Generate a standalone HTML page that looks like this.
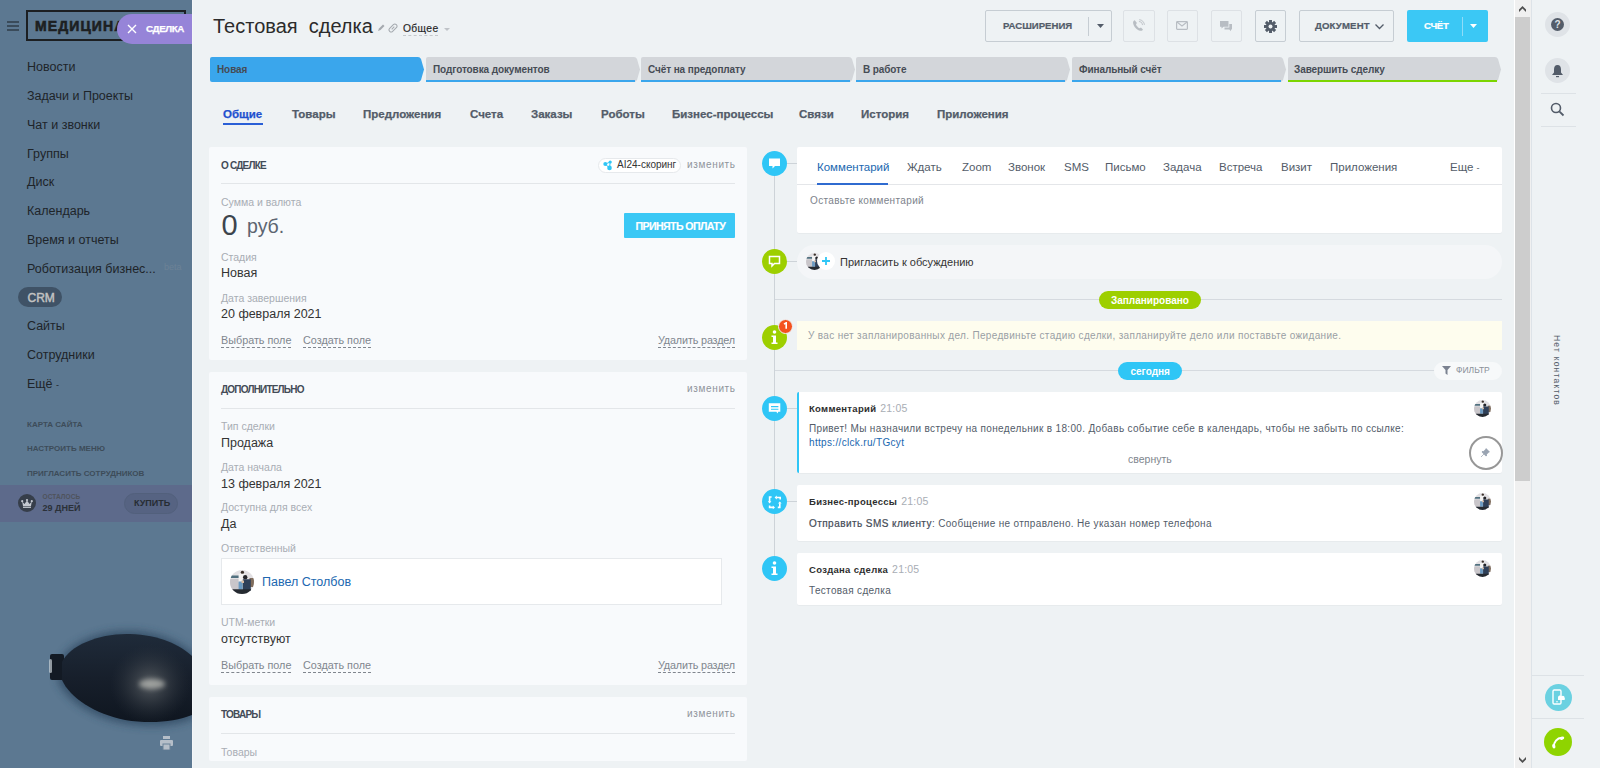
<!DOCTYPE html>
<html><head><meta charset="utf-8">
<style>
*{box-sizing:border-box;margin:0;padding:0}
html,body{width:1600px;height:768px;overflow:hidden}
body{font-family:"Liberation Sans",sans-serif;background:#eef2f4;position:relative;color:#333}
.a{position:absolute;white-space:nowrap}
/* sidebar */
#sb{position:absolute;left:0;top:0;width:192px;height:768px;background:#5c7891;overflow:hidden}
#sb .mi{position:absolute;left:27px;font-size:12.5px;color:#1e2429;line-height:15px;white-space:nowrap}
#sb .sm{position:absolute;left:27px;font-size:8px;font-weight:bold;color:#3d4c59;line-height:10px;white-space:nowrap;margin-top:1px}
/* header */
.btn{position:absolute;border:1px solid #c6cdd3;border-radius:2px}
.bt{position:absolute;font-size:9.6px;font-weight:bold;color:#535c69;line-height:12px;white-space:nowrap;-webkit-text-stroke:0.2px #535c69;margin-top:0.3px}
.stxt{position:absolute;top:64px;font-size:10px;font-weight:bold;color:#464c55;letter-spacing:-0.1px;line-height:12px;white-space:nowrap}
.tab{position:absolute;top:107px;font-size:11.5px;font-weight:bold;color:#535c69;line-height:14px;white-space:nowrap;-webkit-text-stroke:0.25px #535c69}
.card{position:absolute;left:209px;width:538px;background:#f8fafc;border-radius:2px}
.ctitle{position:absolute;left:221px;margin-top:1px;font-size:10px;font-weight:bold;color:#434b57;letter-spacing:-0.8px;line-height:12px;white-space:nowrap}
.chg{position:absolute;left:687px;font-size:10px;color:#8f949b;letter-spacing:0.65px;margin-top:0px;line-height:12px;white-space:nowrap}
.hr{position:absolute;left:221px;width:514px;height:1px;background:#e3e6e9}
.lbl{position:absolute;left:221px;font-size:10.5px;color:#a8adb4;line-height:12px;white-space:nowrap}
.val{position:absolute;left:221px;font-size:12.5px;color:#333;line-height:14px;margin-top:1px;white-space:nowrap}
.dl{position:absolute;font-size:10.8px;margin-top:1px;color:#80868e;line-height:13px;white-space:nowrap;border-bottom:1px dashed #80868e}
.tl{position:absolute;left:797px;width:705px;background:#fff;border-radius:2px;box-shadow:0 1px 1px rgba(0,0,0,0.03)}
.ic{position:absolute;left:762px;width:25px;height:25px;border-radius:50%;background:#2fc6f6}
.conn{position:absolute;left:787px;width:10px;height:1px;background:#cdd3d8}
.et{position:absolute;top:160px;font-size:11.5px;color:#535c69;line-height:14px;white-space:nowrap}
.av{position:absolute;width:17px;height:17px}
.ttl{position:absolute;left:809px;font-size:9.5px;font-weight:bold;color:#2e2e2e;letter-spacing:0.3px;margin-top:-0.5px;line-height:12px;white-space:nowrap}
.ttl span{font-weight:normal;color:#a8adb4;margin-left:4px;font-size:10.5px;letter-spacing:0.2px}
.txt{position:absolute;left:809px;font-size:10px;letter-spacing:0.33px;margin-top:-0.5px;color:#535c69;line-height:13px;white-space:nowrap}
.rp{position:absolute;left:1545px;width:25px;height:25px;border-radius:50%;background:#dfe3e7}
.rsep{position:absolute;left:1541px;width:35px;height:1px;background:#dde2e6}
</style></head><body>

<svg width="0" height="0" style="position:absolute"><defs>
<clipPath id="avc"><circle cx="12" cy="12" r="12"/></clipPath>
<symbol id="ava" viewBox="0 0 24 24"><g clip-path="url(#avc)">
<rect width="24" height="24" fill="#e2e0e3"/>
<rect x="0" y="9" width="10" height="15" fill="#c9c6ca"/>
<path d="M0 5.5H9V8H0Z" fill="#51707f"/>
<rect x="19.5" y="8" width="4.5" height="9" fill="#7f6c5c"/>
<circle cx="12.4" cy="2.4" r="1.7" fill="#3a302a"/>
<path d="M8.6 3.8H15V12.5H8.6Z" fill="#f4f3f3"/>
<path d="M8.6 11.5H12.6V19.5H8.6Z" fill="#6b9ac2"/>
<circle cx="15.2" cy="7.2" r="2.2" fill="#24252a"/>
<path d="M12.8 9.3H20.8V21H12.8Z" fill="#2f4059"/>
<path d="M2 19.3H21V24H2Z" fill="#252a31"/>
<rect x="11.5" y="10.5" width="2.5" height="2.5" fill="#d9bca4"/>
</g></symbol></defs></svg>
<div id="sb">
  <!-- bulb image -->
  <svg class="a" style="left:0;top:576px" width="192" height="192" viewBox="0 576 192 192">
    <defs>
      <linearGradient id="bg1" x1="0" y1="634" x2="0" y2="722" gradientUnits="userSpaceOnUse">
        <stop offset="0" stop-color="#1f2b3a"/>
        <stop offset="0.5" stop-color="#171f2b"/>
        <stop offset="1" stop-color="#0f1620"/>
      </linearGradient>
      <radialGradient id="bg2" cx="150" cy="684" r="40" gradientUnits="userSpaceOnUse">
        <stop offset="0" stop-color="#5d6266" stop-opacity="0.9"/>
        <stop offset="1" stop-color="#2a323c" stop-opacity="0"/>
      </radialGradient>
      <filter id="blr" x="-30%" y="-50%" width="160%" height="200%"><feGaussianBlur stdDeviation="4"/></filter>
      <filter id="blr2" x="-50%" y="-100%" width="200%" height="300%"><feGaussianBlur stdDeviation="2.5"/></filter>
    </defs>
    <path d="M60 662C68 643 100 630 130 631C162 632 182 644 194 654L194 718C176 726 150 728 123 723C92 717 66 700 58 681Z" fill="#253f59" opacity="0.7" filter="url(#blr)"/>
    <rect x="50" y="654" width="14" height="26" rx="2" fill="#131a24"/>
    <rect x="49" y="659" width="3" height="14" rx="1.5" fill="#c8d0d6" opacity="0.7"/>
    <path d="M62 662C70 645 100 633 130 634C160 635 180 645 192 656L192 715C175 722 150 724 125 720C95 714 70 698 62 680Z" fill="url(#bg1)"/>
    <path d="M62 662C70 645 100 633 130 634C160 635 180 645 192 656L192 715C175 722 150 724 125 720C95 714 70 698 62 680Z" fill="url(#bg2)"/>
    <ellipse cx="152" cy="684" rx="13" ry="5" fill="#b0b2ae" opacity="0.8" filter="url(#blr2)"/>
  </svg>
  <!-- hamburger -->
  <div class="a" style="left:7px;top:21px;width:12px;height:2px;background:#3a4b5a"></div>
  <div class="a" style="left:7px;top:25px;width:12px;height:2px;background:#3a4b5a"></div>
  <div class="a" style="left:7px;top:29px;width:12px;height:2px;background:#3a4b5a"></div>
  <div class="a" style="left:26px;top:10px;width:160px;height:31px;border:2px solid #1c1f22"></div>
  <div class="a" style="left:35px;top:18px;font-size:14px;font-weight:bold;color:#1c1f22;line-height:16px;letter-spacing:1.1px;-webkit-text-stroke:0.6px #1c1f22">МЕДИЦИНА</div>
  <div class="a" style="left:117px;top:14px;width:80px;height:30px;border-radius:15px 0 0 15px;background:#9684d8"></div>
  <svg class="a" style="left:127px;top:24px" width="10" height="10" viewBox="0 0 10 10"><path d="M1 1L9 9M9 1L1 9" stroke="#fff" stroke-width="1.4"/></svg>
  <div class="a" style="left:146px;top:22.5px;font-size:9.8px;font-weight:bold;color:#fff;letter-spacing:-0.4px;line-height:12px;-webkit-text-stroke:0.25px #fff">СДЕЛКА</div>

  <div class="mi" style="top:60px">Новости</div>
  <div class="mi" style="top:89px">Задачи и Проекты</div>
  <div class="mi" style="top:118px">Чат и звонки</div>
  <div class="mi" style="top:147px">Группы</div>
  <div class="mi" style="top:175px">Диск</div>
  <div class="mi" style="top:204px">Календарь</div>
  <div class="mi" style="top:233px">Время и отчеты</div>
  <div class="mi" style="top:262px">Роботизация бизнес...</div>
  <div class="a" style="left:164px;top:262px;font-size:9px;color:#6c8296">beta</div>
  <div class="a" style="left:18px;top:287px;width:44px;height:20px;border-radius:10px;background:#3f5266"></div>
  <div class="mi" style="top:290.5px;left:27.5px;color:#c2c2c2;font-size:12px;-webkit-text-stroke:0.45px #c2c2c2">CRM</div>
  <div class="mi" style="top:319px">Сайты</div>
  <div class="mi" style="top:348px">Сотрудники</div>
  <div class="mi" style="top:377px">Ещё <span style="font-size:9px">-</span></div>
  <div class="sm" style="top:419px">КАРТА САЙТА</div>
  <div class="sm" style="top:443px">НАСТРОИТЬ МЕНЮ</div>
  <div class="sm" style="top:468px">ПРИГЛАСИТЬ СОТРУДНИКОВ</div>
  <div class="a" style="left:0;top:485px;width:192px;height:37px;background:#5d6a8b"></div>
  <div class="a" style="left:18px;top:494px;width:18px;height:18px;border-radius:50%;background:#363e4a"></div>
  <svg class="a" style="left:21px;top:498.5px" width="12" height="9" viewBox="0 0 12 9"><circle cx="1.2" cy="2.2" r="1.1" fill="#c3c8d0"/><circle cx="6" cy="1.1" r="1.1" fill="#c3c8d0"/><circle cx="10.8" cy="2.2" r="1.1" fill="#c3c8d0"/><path d="M1.2 2.5L3.5 5L6 1.5L8.5 5L10.8 2.5L10 7H2Z" fill="#c3c8d0"/><rect x="2" y="7.6" width="8" height="1.3" fill="#c3c8d0"/></svg>
  <div class="a" style="left:42.5px;top:493px;font-size:6.5px;font-weight:bold;color:#4f535b;letter-spacing:0.1px;line-height:8px">ОСТАЛОСЬ</div>
  <div class="a" style="left:42.5px;top:503px;font-size:9px;font-weight:bold;color:#2b3139;line-height:10px">29 ДНЕЙ</div>
  <div class="a" style="left:124px;top:493px;width:54px;height:21px;border-radius:11px;background:#566382;border:1px solid #52607c"></div>
  <div class="a" style="left:134px;top:498px;font-size:9px;font-weight:bold;color:#262c33;line-height:10px">КУПИТЬ</div>
  <svg class="a" style="left:160px;top:736px" width="13" height="14" viewBox="0 0 13 14"><rect x="3" y="0" width="7" height="3" fill="#b5bec8"/><rect x="0" y="4" width="13" height="6" rx="1" fill="#b5bec8"/><rect x="3" y="8" width="7" height="6" fill="#b5bec8" stroke="#6b8197" stroke-width="1"/></svg>
</div>
<div class="a" style="left:192px;top:0;width:1px;height:768px;background:#f4f6f8"></div>

<!-- title -->
<div class="a" style="left:213px;top:14px;font-size:20px;color:#2b2b2b;line-height:24px">Тестовая&nbsp; сделка</div>
<svg class="a" style="left:377px;top:24px" width="8" height="8" viewBox="0 0 8 8"><path d="M1 7L2 4.5L6 0.5L7.5 2L3.5 6Z" fill="#a4a9ae"/></svg>
<svg class="a" style="left:388px;top:23px" width="10" height="10" viewBox="0 0 10 10"><g transform="rotate(-45 5 5)"><rect x="0.3" y="2.9" width="9.4" height="4.2" rx="2.1" stroke="#a4a9ae" stroke-width="1" fill="none"/><path d="M3.2 5H6.8" stroke="#a4a9ae" stroke-width="1"/></g></svg>
<div class="a" style="left:403px;top:23px;font-size:10.3px;color:#262626;line-height:12px;letter-spacing:0.35px;-webkit-text-stroke:0.15px #262626;border-bottom:1px dashed #c4c8cc;padding-bottom:0">Общее</div>
<svg class="a" style="left:444px;top:28px" width="6" height="3" viewBox="0 0 6 3"><path d="M0 0H6L3 3Z" fill="#bfc3c8"/></svg>

<!-- buttons -->
<div class="btn" style="left:985px;top:10px;width:127px;height:32px;border-color:#c6cdd3"></div>
<div class="bt" style="left:1003px;top:20px;letter-spacing:0px">РАСШИРЕНИЯ</div>
<div class="a" style="left:1088px;top:17px;width:1px;height:19px;background:#c6cdd3"></div>
<svg class="a" style="left:1097px;top:24px" width="7" height="4" viewBox="0 0 7 4"><path d="M0 0H7L3.5 4Z" fill="#535c69"/></svg>

<div class="btn" style="left:1123px;top:10px;width:32px;height:32px;border-color:#dde1e5"></div>
<svg class="a" style="left:1132px;top:19px" width="13" height="13" viewBox="0 0 15 15"><path d="M3.2 1.5C2 1.8 1 3 1.3 4.8C2 8.5 5.5 12.8 9.6 13.6C11.2 13.9 12.3 13 12.6 12L10.3 9.8L8.8 10.8C7 10 5 7.7 4.6 6L5.7 4.6Z" fill="#b8bdc3"/><path d="M8 2.8a4.2 4.2 0 0 1 4.2 4.2M8.3 0.8a6.2 6.2 0 0 1 6 6" stroke="#b8bdc3" stroke-width="1" fill="none"/></svg>
<div class="btn" style="left:1167px;top:10px;width:31px;height:32px;border-color:#dde1e5"></div>
<svg class="a" style="left:1176px;top:21px" width="12" height="9" viewBox="0 0 12 9"><rect x="0.6" y="0.6" width="10.8" height="7.8" rx="0.8" fill="none" stroke="#b8bdc3" stroke-width="1.2"/><path d="M1 1L6 5L11 1" stroke="#b8bdc3" stroke-width="1.1" fill="none"/></svg>
<div class="btn" style="left:1211px;top:10px;width:31px;height:32px;border-color:#dde1e5"></div>
<svg class="a" style="left:1220px;top:21px" width="12" height="11" viewBox="0 0 12 11"><path d="M0 0H8.5V5.8H3.5L1.5 7.5V5.8H0Z" fill="#b8bdc3"/><path d="M9.3 3H12V8.5H11V10.2L9.3 8.5H4.5V6.6H9.3Z" fill="#b8bdc3"/></svg>
<div class="btn" style="left:1255px;top:10px;width:31px;height:32px;border-color:#c6cdd3"></div>
<svg class="a" style="left:1264px;top:20px" width="13" height="13" viewBox="-7.5 -7.5 15 15"><g fill="#535c69"><circle r="5.2"/><rect x="-1.7" y="-7.5" width="3.4" height="15"/><rect x="-1.7" y="-7.5" width="3.4" height="15" transform="rotate(45)"/><rect x="-1.7" y="-7.5" width="3.4" height="15" transform="rotate(90)"/><rect x="-1.7" y="-7.5" width="3.4" height="15" transform="rotate(135)"/></g><circle r="2.3" fill="#eef2f4"/></svg>

<div class="btn" style="left:1299px;top:10px;width:95px;height:32px;border-color:#c6cdd3"></div>
<div class="bt" style="left:1315px;top:20px;letter-spacing:0.15px">ДОКУМЕНТ</div>
<svg class="a" style="left:1375px;top:24px" width="9" height="6" viewBox="0 0 9 6"><path d="M0.5 0.5L4.5 4.5L8.5 0.5" stroke="#535c69" stroke-width="1.3" fill="none"/></svg>

<div class="a" style="left:1407px;top:10px;width:81px;height:32px;background:#3bc8f5;border-radius:2px"></div>
<div class="bt" style="left:1424px;top:20px;color:#fff;letter-spacing:-0.3px;-webkit-text-stroke:0.2px #fff">СЧЁТ</div>
<div class="a" style="left:1462px;top:17px;width:1px;height:19px;background:#8fdcf8"></div>
<svg class="a" style="left:1470px;top:24px" width="7" height="4" viewBox="0 0 7 4"><path d="M0 0H7L3.5 4Z" fill="#fff"/></svg>

<!-- stages -->
<svg class="a" style="left:0;top:0" width="1600" height="90" viewBox="0 0 1600 90">
  <g>
    <path d="M212 57H418Q420 57 421 59L424 69.5L421 80Q420 82 418 82H212Q210 82 210 80V59Q210 57 212 57Z" fill="#3aa6ec"/>
    <path d="M428 57H634Q636 57 637 59L640 69.5L637 80Q636 82 634 82H428Q426 82 426 80V59Q426 57 428 57Z" fill="#d3d6da"/>
    <rect x="426" y="80" width="209" height="2" fill="#3aa6ec"/>
    <path d="M643 57H849Q851 57 852 59L855 69.5L852 80Q851 82 849 82H643Q641 82 641 80V59Q641 57 643 57Z" fill="#d3d6da"/>
    <rect x="641" y="80" width="209" height="2" fill="#3aa6ec"/>
    <path d="M858 57H1064Q1066 57 1067 59L1070 69.5L1067 80Q1066 82 1064 82H858Q856 82 856 80V59Q856 57 858 57Z" fill="#d3d6da"/>
    <rect x="856" y="80" width="209" height="2" fill="#3aa6ec"/>
    <path d="M1074 57H1280Q1282 57 1283 59L1286 69.5L1283 80Q1282 82 1280 82H1074Q1072 82 1072 80V59Q1072 57 1074 57Z" fill="#d3d6da"/>
    <rect x="1072" y="80" width="209" height="2" fill="#3aa6ec"/>
    <path d="M1290 57H1495Q1497 57 1498 59L1501 69.5L1498 80Q1497 82 1495 82H1290Q1288 82 1288 80V59Q1288 57 1290 57Z" fill="#d3d6da"/>
    <rect x="1288" y="80" width="209" height="2" fill="#7bd500"/>
  </g>
</svg>
<div class="stxt" style="left:217px">Новая</div>
<div class="stxt" style="left:433px">Подготовка документов</div>
<div class="stxt" style="left:648px">Счёт на предоплату</div>
<div class="stxt" style="left:863px">В работе</div>
<div class="stxt" style="left:1079px">Финальный счёт</div>
<div class="stxt" style="left:1294px">Завершить сделку</div>

<!-- tabs -->
<div class="tab" style="left:223px;color:#1f50cf;-webkit-text-stroke:0.25px #1f50cf">Общие</div>
<div class="a" style="left:223px;top:123.2px;width:40px;height:1.6px;background:#2a5fd6"></div>
<div class="tab" style="left:292px">Товары</div>
<div class="tab" style="left:363px">Предложения</div>
<div class="tab" style="left:470px">Счета</div>
<div class="tab" style="left:531px">Заказы</div>
<div class="tab" style="left:601px">Роботы</div>
<div class="tab" style="left:672px">Бизнес-процессы</div>
<div class="tab" style="left:799px">Связи</div>
<div class="tab" style="left:861px">История</div>
<div class="tab" style="left:937px">Приложения</div>

<!-- left cards -->
<div class="card" style="top:147px;height:213px"></div>
<div class="ctitle" style="top:159px">О СДЕЛКЕ</div>
<div class="a" style="left:598px;top:158px;width:83px;height:15px;border-radius:8px;background:#fff;border:1px solid #e6e9ec"></div>
<svg class="a" style="left:603px;top:160px" width="10" height="11" viewBox="0 0 10 11"><path d="M2.3 4.1L7.2 2M2.3 4.1L6.5 7.9M7.2 2L6.5 7.9" stroke="#2fc6f6" stroke-width="1"/><circle cx="2.3" cy="4.1" r="2" fill="#2fc6f6"/><circle cx="7.2" cy="2" r="1.6" fill="#2fc6f6"/><circle cx="6.5" cy="7.9" r="2.3" fill="#2fc6f6"/></svg>
<div class="a" style="left:617px;top:159px;font-size:10px;color:#333;line-height:12px">AI24-скоринг</div>
<div class="chg" style="top:159px">изменить</div>
<div class="hr" style="top:183px"></div>
<div class="lbl" style="top:196px">Сумма и валюта</div>
<div class="a" style="left:221.5px;top:210px;font-size:29px;color:#3d444d;line-height:30px">0</div>
<div class="a" style="left:247px;top:215px;font-size:19.5px;color:#5d6571;line-height:22px">руб.</div>
<div class="a" style="left:624px;top:213px;width:111px;height:25px;background:#3bc8f5;border-radius:1px"></div>
<div class="a" style="left:635.5px;top:219.5px;font-size:10.6px;font-weight:bold;color:#fff;letter-spacing:-0.6px;line-height:12px;-webkit-text-stroke:0.15px #fff">ПРИНЯТЬ ОПЛАТУ</div>
<div class="lbl" style="top:251px">Стадия</div>
<div class="val" style="top:265px">Новая</div>
<div class="lbl" style="top:292px">Дата завершения</div>
<div class="val" style="top:306px">20 февраля 2021</div>
<div class="dl" style="left:221px;top:333px">Выбрать поле</div>
<div class="dl" style="left:303px;top:333px">Создать поле</div>
<div class="dl" style="left:658px;top:333px;letter-spacing:-0.15px">Удалить раздел</div>

<div class="card" style="top:372px;height:313px"></div>
<div class="ctitle" style="top:383px">ДОПОЛНИТЕЛЬНО</div>
<div class="chg" style="top:383px">изменить</div>
<div class="hr" style="top:408px"></div>
<div class="lbl" style="top:420px">Тип сделки</div>
<div class="val" style="top:435px">Продажа</div>
<div class="lbl" style="top:461px">Дата начала</div>
<div class="val" style="top:476px">13 февраля 2021</div>
<div class="lbl" style="top:501px">Доступна для всех</div>
<div class="val" style="top:516px">Да</div>
<div class="lbl" style="top:542px">Ответственный</div>
<div class="a" style="left:221px;top:558px;width:501px;height:47px;background:#fff;border:1px solid #e6e9ec"></div>
<svg class="av" style="left:230px;top:570px;width:24px;height:24px" viewBox="0 0 24 24"><use href="#ava"/></svg>
<div class="a" style="left:262px;top:575px;font-size:12.5px;color:#2067b0;line-height:14px">Павел Столбов</div>
<div class="lbl" style="top:616px">UTM-метки</div>
<div class="val" style="top:631px">отсутствуют</div>
<div class="dl" style="left:221px;top:658px">Выбрать поле</div>
<div class="dl" style="left:303px;top:658px">Создать поле</div>
<div class="dl" style="left:658px;top:658px;letter-spacing:-0.15px">Удалить раздел</div>

<div class="card" style="top:697px;height:64px"></div>
<div class="ctitle" style="top:708px">ТОВАРЫ</div>
<div class="chg" style="top:708px">изменить</div>
<div class="hr" style="top:733px"></div>
<div class="lbl" style="top:746px">Товары</div>

<!-- timeline -->
<div class="a" style="left:774px;top:163px;width:1px;height:406px;background:#cdd3d8"></div>
<div class="conn" style="top:163px"></div>
<div class="ic" style="top:151px"></div>
<svg class="a" style="left:768px;top:157px" width="13" height="13" viewBox="0 0 13 13"><path d="M1 1.5H12V9H7L4.5 11.5V9H1Z" fill="#fff"/></svg>
<div class="tl" style="top:147px;height:86px"></div>
<div class="a" style="left:797px;top:184px;width:705px;height:1px;background:#e4e6e9"></div>
<div class="et" style="left:817px;color:#2067b0">Комментарий</div>
<div class="a" style="left:817px;top:183px;width:71px;height:2px;background:#2f6bd0"></div>
<div class="et" style="left:907px">Ждать</div>
<div class="et" style="left:962px">Zoom</div>
<div class="et" style="left:1008px">Звонок</div>
<div class="et" style="left:1064px">SMS</div>
<div class="et" style="left:1105px">Письмо</div>
<div class="et" style="left:1163px">Задача</div>
<div class="et" style="left:1219px">Встреча</div>
<div class="et" style="left:1281px">Визит</div>
<div class="et" style="left:1330px">Приложения</div>
<div class="et" style="left:1450px">Еще <span style="font-size:9px">-</span></div>
<div class="a" style="left:810px;top:195px;font-size:10px;color:#7d838b;letter-spacing:0.35px;line-height:12px">Оставьте комментарий</div>

<div class="conn" style="top:261px"></div>
<div class="ic" style="top:249px;background:#9dcf00"></div>
<svg class="a" style="left:768px;top:255px" width="13" height="13" viewBox="0 0 13 13"><path d="M1.5 1.5H11.5V8.5H6.5L4 11V8.5H1.5Z" fill="none" stroke="#fff" stroke-width="1.5"/></svg>
<div class="a" style="left:797px;top:245px;width:705px;height:34px;border-radius:17px;background:#f4f6f8"></div>
<svg class="av" style="left:806px;top:253px" viewBox="0 0 24 24"><use href="#ava"/></svg>
<div class="a" style="left:817px;top:252px;width:18px;height:18px;border-radius:50%;background:#fff"></div>
<svg class="a" style="left:821px;top:256px" width="10" height="10" viewBox="0 0 10 10"><path d="M5 1V9M1 5H9" stroke="#2fc6f6" stroke-width="1.8"/></svg>
<div class="a" style="left:840px;top:256px;font-size:11px;color:#333;line-height:13px">Пригласить к обсуждению</div>

<div class="a" style="left:775px;top:299px;width:727px;height:1px;background:#d5dadf"></div>
<div class="a" style="left:1099px;top:291px;width:102px;height:18px;border-radius:9px;background:#9dcf00"></div>
<div class="a" style="left:1111px;top:294.5px;font-size:10px;font-weight:bold;color:#fff;line-height:12px">Запланировано</div>

<div class="ic" style="top:325px;background:#9dcf00"></div>
<svg class="a" style="left:769px;top:330px" width="11" height="15" viewBox="0 0 11 15"><circle cx="5.5" cy="2" r="1.8" fill="#fff"/><path d="M2.5 5.5H7V12.5H8.5V14H2.5V12.5H4V7H2.5Z" fill="#fff"/></svg>
<div class="a" style="left:778px;top:318.5px;width:15px;height:15px;border-radius:50%;background:#f4511e;border:1.5px solid #eef2f4"></div>
<svg class="a" style="left:782px;top:322px" width="7" height="8" viewBox="0 0 7 8"><path d="M2 2.2L4.2 0.8V6.8" stroke="#fff" stroke-width="1.6" fill="none"/></svg>
<div class="a" style="left:797px;top:321px;width:705px;height:29px;background:#fefdee"></div>
<div class="a" style="left:808px;top:329.5px;font-size:10px;color:#9a9fa5;letter-spacing:0.33px;line-height:12px">У вас нет запланированных дел. Передвиньте стадию сделки, запланируйте дело или поставьте ожидание.</div>

<div class="a" style="left:775px;top:370px;width:727px;height:1px;background:#d5dadf"></div>
<div class="a" style="left:1118px;top:362px;width:64px;height:18px;border-radius:9px;background:#2fc6f6"></div>
<div class="a" style="left:1130.5px;top:365.5px;font-size:10px;font-weight:bold;color:#fff;line-height:12px">сегодня</div>
<div class="a" style="left:1434px;top:362px;width:68px;height:18px;border-radius:9px;background:#f7f9fa"></div>
<svg class="a" style="left:1442px;top:366px" width="9" height="9" viewBox="0 0 9 9"><path d="M0 0H9L5.5 4V9L3.5 7.5V4Z" fill="#7b8290"/></svg>
<div class="a" style="left:1456px;top:365px;font-size:8.5px;color:#8a9099;line-height:10px">ФИЛЬТР</div>

<!-- comment item -->
<div class="conn" style="top:408px"></div>
<div class="ic" style="top:396px"></div>
<svg class="a" style="left:760px;top:390px" width="30" height="30" viewBox="0 0 30 30"><path d="M8.8 13.3H20.3V21.7H18.3L17.4 23.5L16.4 21.7H8.8Z" fill="#fff"/><path d="M11 16.6H18.4M11 19.3H18.4" stroke="#2fc6f6" stroke-width="1.1"/></svg>
<div class="tl" style="top:392px;height:81px;border-left:2px solid #2fc6f6"></div>
<div class="ttl" style="top:402px">Комментарий<span>21:05</span></div>
<svg class="av" style="left:1474px;top:400px" viewBox="0 0 24 24"><use href="#ava"/></svg>
<div class="txt" style="top:422px">Привет! Мы назначили встречу на понедельник в 18:00. Добавь событие себе в календарь, чтобы не забыть по ссылке:</div>
<div class="txt" style="top:436px;color:#2067b0">https://clck.ru/TGcyt</div>
<div class="a" style="left:1128px;top:453px;font-size:10.5px;color:#80868e;line-height:12px">свернуть</div>
<div class="a" style="left:1469px;top:436px;width:34px;height:34px;border-radius:50%;border:2.5px solid #979797;background:#fff"></div>
<svg class="a" style="left:1480px;top:447px" width="11" height="11" viewBox="0 0 11 11"><path d="M6 1L10 5L8.8 5.6L6.8 7.6L7 9L5.8 9.2L1.8 5.2L2 4L3.4 4.2L5.4 2.2Z" fill="#9aa4b2"/><path d="M4 7L1 10" stroke="#b4bcc6" stroke-width="1"/></svg>

<!-- BP item -->
<div class="conn" style="top:501px"></div>
<div class="ic" style="top:489px"></div>
<svg class="a" style="left:760px;top:487px" width="30" height="30" viewBox="0 0 30 30"><g stroke="#fff" stroke-width="1.6" fill="none"><path d="M11.6 10H9.6V14.8"/><path d="M16.5 10.5H20.2V12.6"/><path d="M9.6 18.4V20.4H13"/><path d="M17.8 20.4H19.8V16.2"/></g><g fill="#fff"><path d="M7.8 14.3H11.4L9.6 16.4Z"/><path d="M16.8 8.6V12.4L14.6 10.5Z"/><path d="M12.8 18.6V22.2L15 20.4Z"/><path d="M18 16.6H21.6L19.8 14.4Z"/></g></svg>
<div class="tl" style="top:485px;height:56px"></div>
<div class="ttl" style="top:495px">Бизнес-процессы<span>21:05</span></div>
<svg class="av" style="left:1474px;top:493px" viewBox="0 0 24 24"><use href="#ava"/></svg>
<div class="txt" style="top:517px"><span style="color:#454c57;-webkit-text-stroke:0.2px #454c57;letter-spacing:0.45px">Отправить SMS клиенту</span>: Сообщение не отправлено. Не указан номер телефона</div>

<!-- created -->
<div class="ic" style="top:556px"></div>
<svg class="a" style="left:769px;top:561px" width="11" height="15" viewBox="0 0 11 15"><circle cx="5.5" cy="2" r="1.8" fill="#fff"/><path d="M2.5 5.5H7V12.5H8.5V14H2.5V12.5H4V7H2.5Z" fill="#fff"/></svg>
<div class="tl" style="top:553px;height:52px"></div>
<div class="ttl" style="top:563px">Создана сделка<span>21:05</span></div>
<svg class="av" style="left:1474px;top:560px" viewBox="0 0 24 24"><use href="#ava"/></svg>
<div class="txt" style="top:584px">Тестовая сделка</div>

<!-- scrollbar -->
<div class="a" style="left:1514px;top:0;width:1px;height:768px;background:#fff"></div>
<div class="a" style="left:1515px;top:0;width:16px;height:768px;background:#f0f0f0"></div>
<div class="a" style="left:1515px;top:17px;width:15px;height:464px;background:#cdcdcd"></div>
<svg class="a" style="left:1519px;top:6px" width="7" height="6" viewBox="0 0 7 6"><path d="M0 3.6L3.5 0L7 3.6V6L3.5 2.4L0 6Z" fill="#4f4f4f"/></svg>
<svg class="a" style="left:1519px;top:757px" width="7" height="6" viewBox="0 0 7 6"><path d="M0 0L3.5 3.6L7 0V2.4L3.5 6L0 2.4Z" fill="#4f4f4f"/></svg>

<!-- right panel -->
<div class="a" style="left:1531px;top:0;width:1px;height:768px;background:#dde3e8"></div>
<div class="a" style="left:1532px;top:0;width:68px;height:768px;background:#eef2f4"></div>
<div class="rp" style="top:12px"></div>
<svg class="a" style="left:1551px;top:18px" width="13" height="13" viewBox="0 0 13 13"><circle cx="6.5" cy="6.5" r="6.5" fill="#535c69"/><text x="6.5" y="10.3" font-size="10" font-weight="bold" fill="#dfe3e7" text-anchor="middle" font-family="Liberation Sans">?</text></svg>
<div class="rp" style="top:58px"></div>
<svg class="a" style="left:1551px;top:64px" width="13" height="14" viewBox="0 0 13 14"><path d="M6.5 1C4 1 3 3 3 5.5V8.5L1 11H12L10 8.5V5.5C10 3 9 1 6.5 1Z" fill="#535c69"/><path d="M5 12H8V13.2H5Z" fill="#535c69"/></svg>
<div class="rsep" style="top:93px"></div>
<svg class="a" style="left:1550px;top:102px" width="15" height="15" viewBox="0 0 15 15"><circle cx="6" cy="6" r="4.5" stroke="#535c69" stroke-width="1.6" fill="none"/><path d="M9.3 9.3L13.5 13.5" stroke="#535c69" stroke-width="1.8"/></svg>
<div class="rsep" style="top:126px"></div>
<div class="a" style="left:1549px;top:335px;width:14px;height:72px;"><div style="position:absolute;left:0;top:0;transform-origin:0 0;transform:translate(13px,0) rotate(90deg);font-size:8.5px;color:#535c69;letter-spacing:1.2px;white-space:nowrap;line-height:10px">Нет контактов</div></div>
<div class="rsep" style="top:675px;left:1532px;width:52px"></div>
<div class="a" style="left:1545px;top:684px;width:27px;height:27px;border-radius:50%;background:#6bd1e1"></div>
<svg class="a" style="left:1552px;top:689px" width="14" height="16" viewBox="0 0 14 16"><rect x="1" y="1" width="8" height="14" rx="1.2" stroke="#fff" stroke-width="1.4" fill="none"/><circle cx="5" cy="12.8" r="0.8" fill="#fff"/><path d="M6 11V8.5a2 2 0 0 1 3.6-1.2a1.8 1.8 0 0 1 3 1.6a1.3 1.3 0 0 1-0.5 2.1Z" fill="#fff"/></svg>
<div class="rsep" style="top:718px;left:1532px;width:52px"></div>
<div class="a" style="left:1544px;top:728px;width:28px;height:28px;border-radius:50%;background:#8fd400"></div>
<svg class="a" style="left:1551px;top:735px" width="14" height="14" viewBox="0 0 14 14"><path d="M3 11.5C2.6 7 6 3 10.8 2.8" stroke="#fff" stroke-width="2" fill="none"/><ellipse cx="11" cy="3.2" rx="2.3" ry="1.6" transform="rotate(-15 11 3.2)" fill="#fff"/><ellipse cx="2.8" cy="11.2" rx="1.6" ry="2.3" transform="rotate(-15 2.8 11.2)" fill="#fff"/></svg>


</body></html>
